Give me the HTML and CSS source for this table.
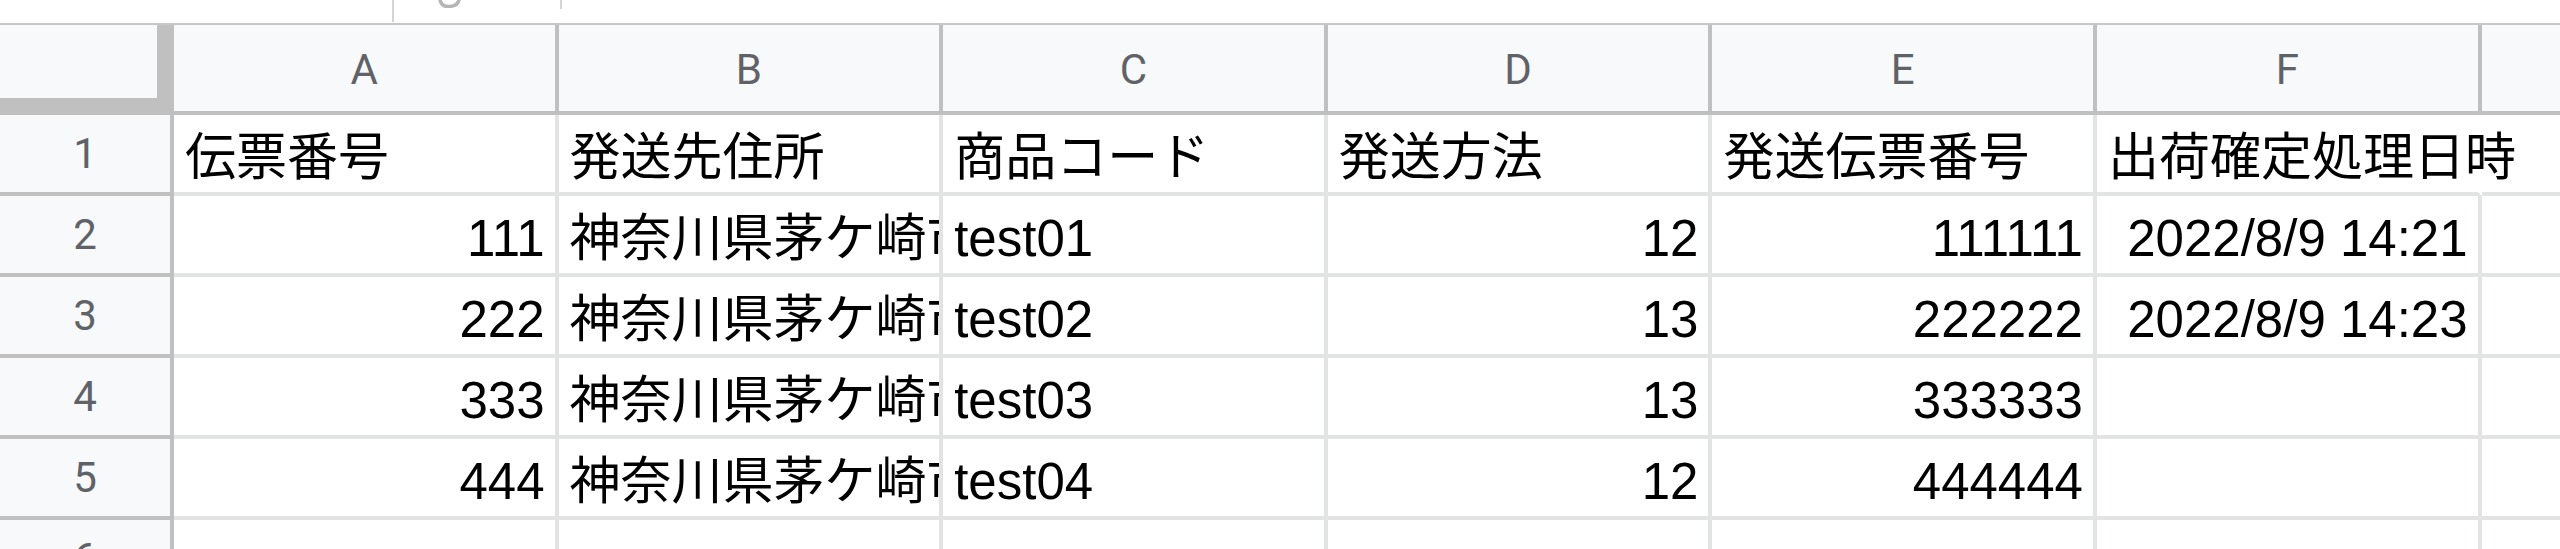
FILE: index.html
```html
<!DOCTYPE html>
<html lang="ja">
<head>
<meta charset="utf-8">
<title>Sheet</title>
<link rel="stylesheet" href="styles.css">
</head>
<body>
<div class="formula-bar">
  <div class="name-box"></div>
  <div class="fx-area">
    <svg class="fx-icon" width="24" height="8" viewBox="0 0 24 8" aria-hidden="true"><path d="M2 0 C3 5 7 7 12 6.5 C17 6 20 4 21 0" fill="none" stroke="#b5b5b5" stroke-width="3.5" stroke-linecap="round"/></svg>
  </div>
  <div class="fx-sep"></div>
</div>
<div class="grid">
  <div class="row head">
    <div class="corner"></div>
    <div class="colhead">A</div>
    <div class="colhead">B</div>
    <div class="colhead">C</div>
    <div class="colhead">D</div>
    <div class="colhead">E</div>
    <div class="colhead">F</div>
    <div class="colhead last"></div>
  </div>
  <div class="row">
    <div class="rowhead">1</div>
    <div class="cell"><span>伝票番号</span></div>
    <div class="cell"><span>発送先住所</span></div>
    <div class="cell"><span>商品コード</span></div>
    <div class="cell"><span>発送方法</span></div>
    <div class="cell"><span>発送伝票番号</span></div>
    <div class="cell spill"><span>出荷確定処理日時</span></div>
    <div class="cell last"></div>
  </div>
  <div class="row">
    <div class="rowhead">2</div>
    <div class="cell num"><span>111</span></div>
    <div class="cell"><span>神奈川県茅ケ崎市茅ヶ崎1-1-1</span></div>
    <div class="cell"><span>test01</span></div>
    <div class="cell num"><span>12</span></div>
    <div class="cell num"><span>111111</span></div>
    <div class="cell num"><span>2022/8/9 14:21</span></div>
    <div class="cell last"></div>
  </div>
  <div class="row">
    <div class="rowhead">3</div>
    <div class="cell num"><span>222</span></div>
    <div class="cell"><span>神奈川県茅ケ崎市茅ヶ崎2-2-2</span></div>
    <div class="cell"><span>test02</span></div>
    <div class="cell num"><span>13</span></div>
    <div class="cell num"><span>222222</span></div>
    <div class="cell num"><span>2022/8/9 14:23</span></div>
    <div class="cell last"></div>
  </div>
  <div class="row">
    <div class="rowhead">4</div>
    <div class="cell num"><span>333</span></div>
    <div class="cell"><span>神奈川県茅ケ崎市茅ヶ崎3-3-3</span></div>
    <div class="cell"><span>test03</span></div>
    <div class="cell num"><span>13</span></div>
    <div class="cell num"><span>333333</span></div>
    <div class="cell"></div>
    <div class="cell last"></div>
  </div>
  <div class="row">
    <div class="rowhead">5</div>
    <div class="cell num"><span>444</span></div>
    <div class="cell"><span>神奈川県茅ケ崎市茅ヶ崎4-4-4</span></div>
    <div class="cell"><span>test04</span></div>
    <div class="cell num"><span>12</span></div>
    <div class="cell num"><span>444444</span></div>
    <div class="cell"></div>
    <div class="cell last"></div>
  </div>
  <div class="row partial">
    <div class="rowhead">6</div>
    <div class="cell"></div>
    <div class="cell"></div>
    <div class="cell"></div>
    <div class="cell"></div>
    <div class="cell"></div>
    <div class="cell"></div>
    <div class="cell last"></div>
  </div>
</div>
</body>
</html>
```

FILE: styles.css
```css
html, body {
  margin: 0;
  padding: 0;
  background: #ffffff;
}

body {
  width: 2560px;
  height: 549px;
  overflow: hidden;
}

.formula-bar {
  display: flex;
  height: 23px;
  border-bottom: 2px solid #c7c7c7;
}

.name-box {
  flex: none;
  width: 392px;
  height: 22px;
  border-right: 2px solid #d4d4d4;
}

.fx-area {
  flex: none;
  width: 166px;
  display: flex;
  align-items: flex-start;
  padding-left: 44px;
  box-sizing: border-box;
}

.fx-icon {
  display: block;
}

.fx-sep {
  flex: none;
  width: 2px;
  height: 9px;
  background: #d4d4d4;
}

.grid {
  display: flex;
  flex-direction: column;
  width: 2560px;
  height: 524px;
  overflow: hidden;
}

.row {
  display: flex;
  flex: none;
  height: 81px;
}

.row.head {
  height: 90px;
}

.row.partial {
  height: 29px;
  overflow: hidden;
}

.corner {
  flex: none;
  width: 174px;
  box-sizing: border-box;
  background: #f8f9fa;
  border-right: 17px solid #c0c0c0;
  border-bottom: 17px solid #c0c0c0;
}

.colhead {
  flex: none;
  width: 384.6px;
  box-sizing: border-box;
  background: #f8f9fa;
  border-right: 4px solid #c0c0c0;
  border-bottom: 4px solid #c0c0c0;
  display: flex;
  align-items: center;
  justify-content: center;
  font-family: Roboto, "Liberation Sans", sans-serif;
  font-size: 42px;
  color: #5f6368;
  padding-top: 2px;
}

.rowhead {
  flex: none;
  width: 174px;
  box-sizing: border-box;
  background: #f8f9fa;
  border-right: 4px solid #c0c0c0;
  border-bottom: 4px solid #c0c0c0;
  display: flex;
  align-items: center;
  justify-content: center;
  font-family: Roboto, "Liberation Sans", sans-serif;
  font-size: 42px;
  color: #5f6368;
}

.partial .rowhead {
  align-items: flex-start;
  padding-top: 14px;
  border-bottom: none;
  overflow: hidden;
}

.cell {
  flex: none;
  width: 384.6px;
  box-sizing: border-box;
  border-right: 4px solid #e2e3e3;
  border-bottom: 4px solid #e2e3e3;
  display: flex;
  align-items: flex-end;
  justify-content: flex-start;
  padding: 0 0 5px 11px;
  font-family: "Liberation Sans", "Noto Sans CJK JP", sans-serif;
  font-size: 51px;
  line-height: 58px;
  color: #000000;
  white-space: nowrap;
  overflow: hidden;
}

.cell > span {
  display: block;
  min-width: 0;
  overflow: hidden;
}

.partial .cell {
  border-bottom: none;
}

.cell.num {
  justify-content: flex-end;
  padding-right: 10px;
}

.cell.spill {
  overflow: visible;
  border-right-color: transparent;
}

.cell.spill > span {
  overflow: visible;
  flex: none;
}

.colhead.last,
.cell.last {
  flex: 1 1 auto;
  width: auto;
  min-width: 0;
  border-right: none;
}
```
